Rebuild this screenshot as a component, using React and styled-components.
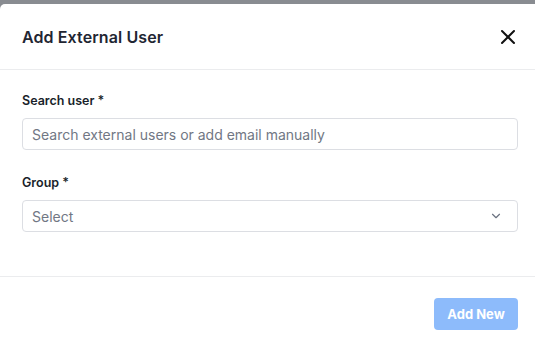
import React from "react";
import styled, { createGlobalStyle } from "styled-components";
import { X, ChevronDown } from "lucide-react";

const Global = createGlobalStyle`
  html, body { margin: 0; padding: 0; }
  body {
    background: #898c91;
    font-family: "Inter", "Noto Sans", sans-serif;
    overflow: hidden;
    width: 535px;
    height: 345px;
  }
`;

const Modal = styled.div`
  margin-top: 4px;
  width: 540px;
  min-height: 341px;
  background: #ffffff;
  border-radius: 5px 5px 0 0;
  display: flex;
  flex-direction: column;
  & > * { flex-shrink: 0; }
`;

const Header = styled.header`
  height: 66px;
  box-sizing: border-box;
  padding: 0 22px;
  display: flex;
  align-items: center;
  justify-content: space-between;
  border-bottom: 1px solid #ebecee;
`;

const Title = styled.h2`
  margin: 0;
  font-size: 16px;
  font-weight: 600;
  color: #1f2633;
  letter-spacing: 0.1px;
`;

const CloseButton = styled.button`
  border: 0;
  background: none;
  padding: 0;
  margin-right: -2px;
  display: flex;
  color: #111111;
  cursor: pointer;
`;

const Body = styled.div`
  padding: 22px 22px 44px;
  display: flex;
  flex-direction: column;
  gap: 24px;
  border-bottom: 1px solid #ebecee;
`;

const Field = styled.div`
  display: flex;
  flex-direction: column;
  gap: 8px;
`;

const Label = styled.label`
  font-size: 12.5px;
  line-height: 18px;
  font-weight: 600;
  color: #1a1f2b;
`;

const Control = styled.div`
  height: 32px;
  box-sizing: border-box;
  border: 1px solid #dcdee3;
  border-radius: 4px;
  padding: 0 14px 0 9px;
  display: flex;
  align-items: center;
  justify-content: space-between;
  font-size: 14px;
  color: #717784;
`;

const Footer = styled.footer`
  padding: 21px 22px;
  display: flex;
  justify-content: flex-end;
`;

const PrimaryButton = styled.button`
  height: 32px;
  width: 84px;
  border: 0;
  border-radius: 4px;
  background: #8dbbfb;
  color: #ffffff;
  font-family: "Inter", sans-serif;
  font-size: 13px;
  font-weight: 700;
  cursor: not-allowed;
`;

export default function App() {
  return (
    <>
      <Global />
      <Modal>
        <Header>
          <Title>Add External User</Title>
          <CloseButton aria-label="Close">
            <X size={24} strokeWidth={2} />
          </CloseButton>
        </Header>
        <Body>
          <Field>
            <Label>Search user *</Label>
            <Control>Search external users or add email manually</Control>
          </Field>
          <Field>
            <Label>Group *</Label>
            <Control>
              Select
              <ChevronDown size={14} strokeWidth={2} color="#6b7280" />
            </Control>
          </Field>
        </Body>
        <Footer>
          <PrimaryButton disabled>Add New</PrimaryButton>
        </Footer>
      </Modal>
    </>
  );
}
